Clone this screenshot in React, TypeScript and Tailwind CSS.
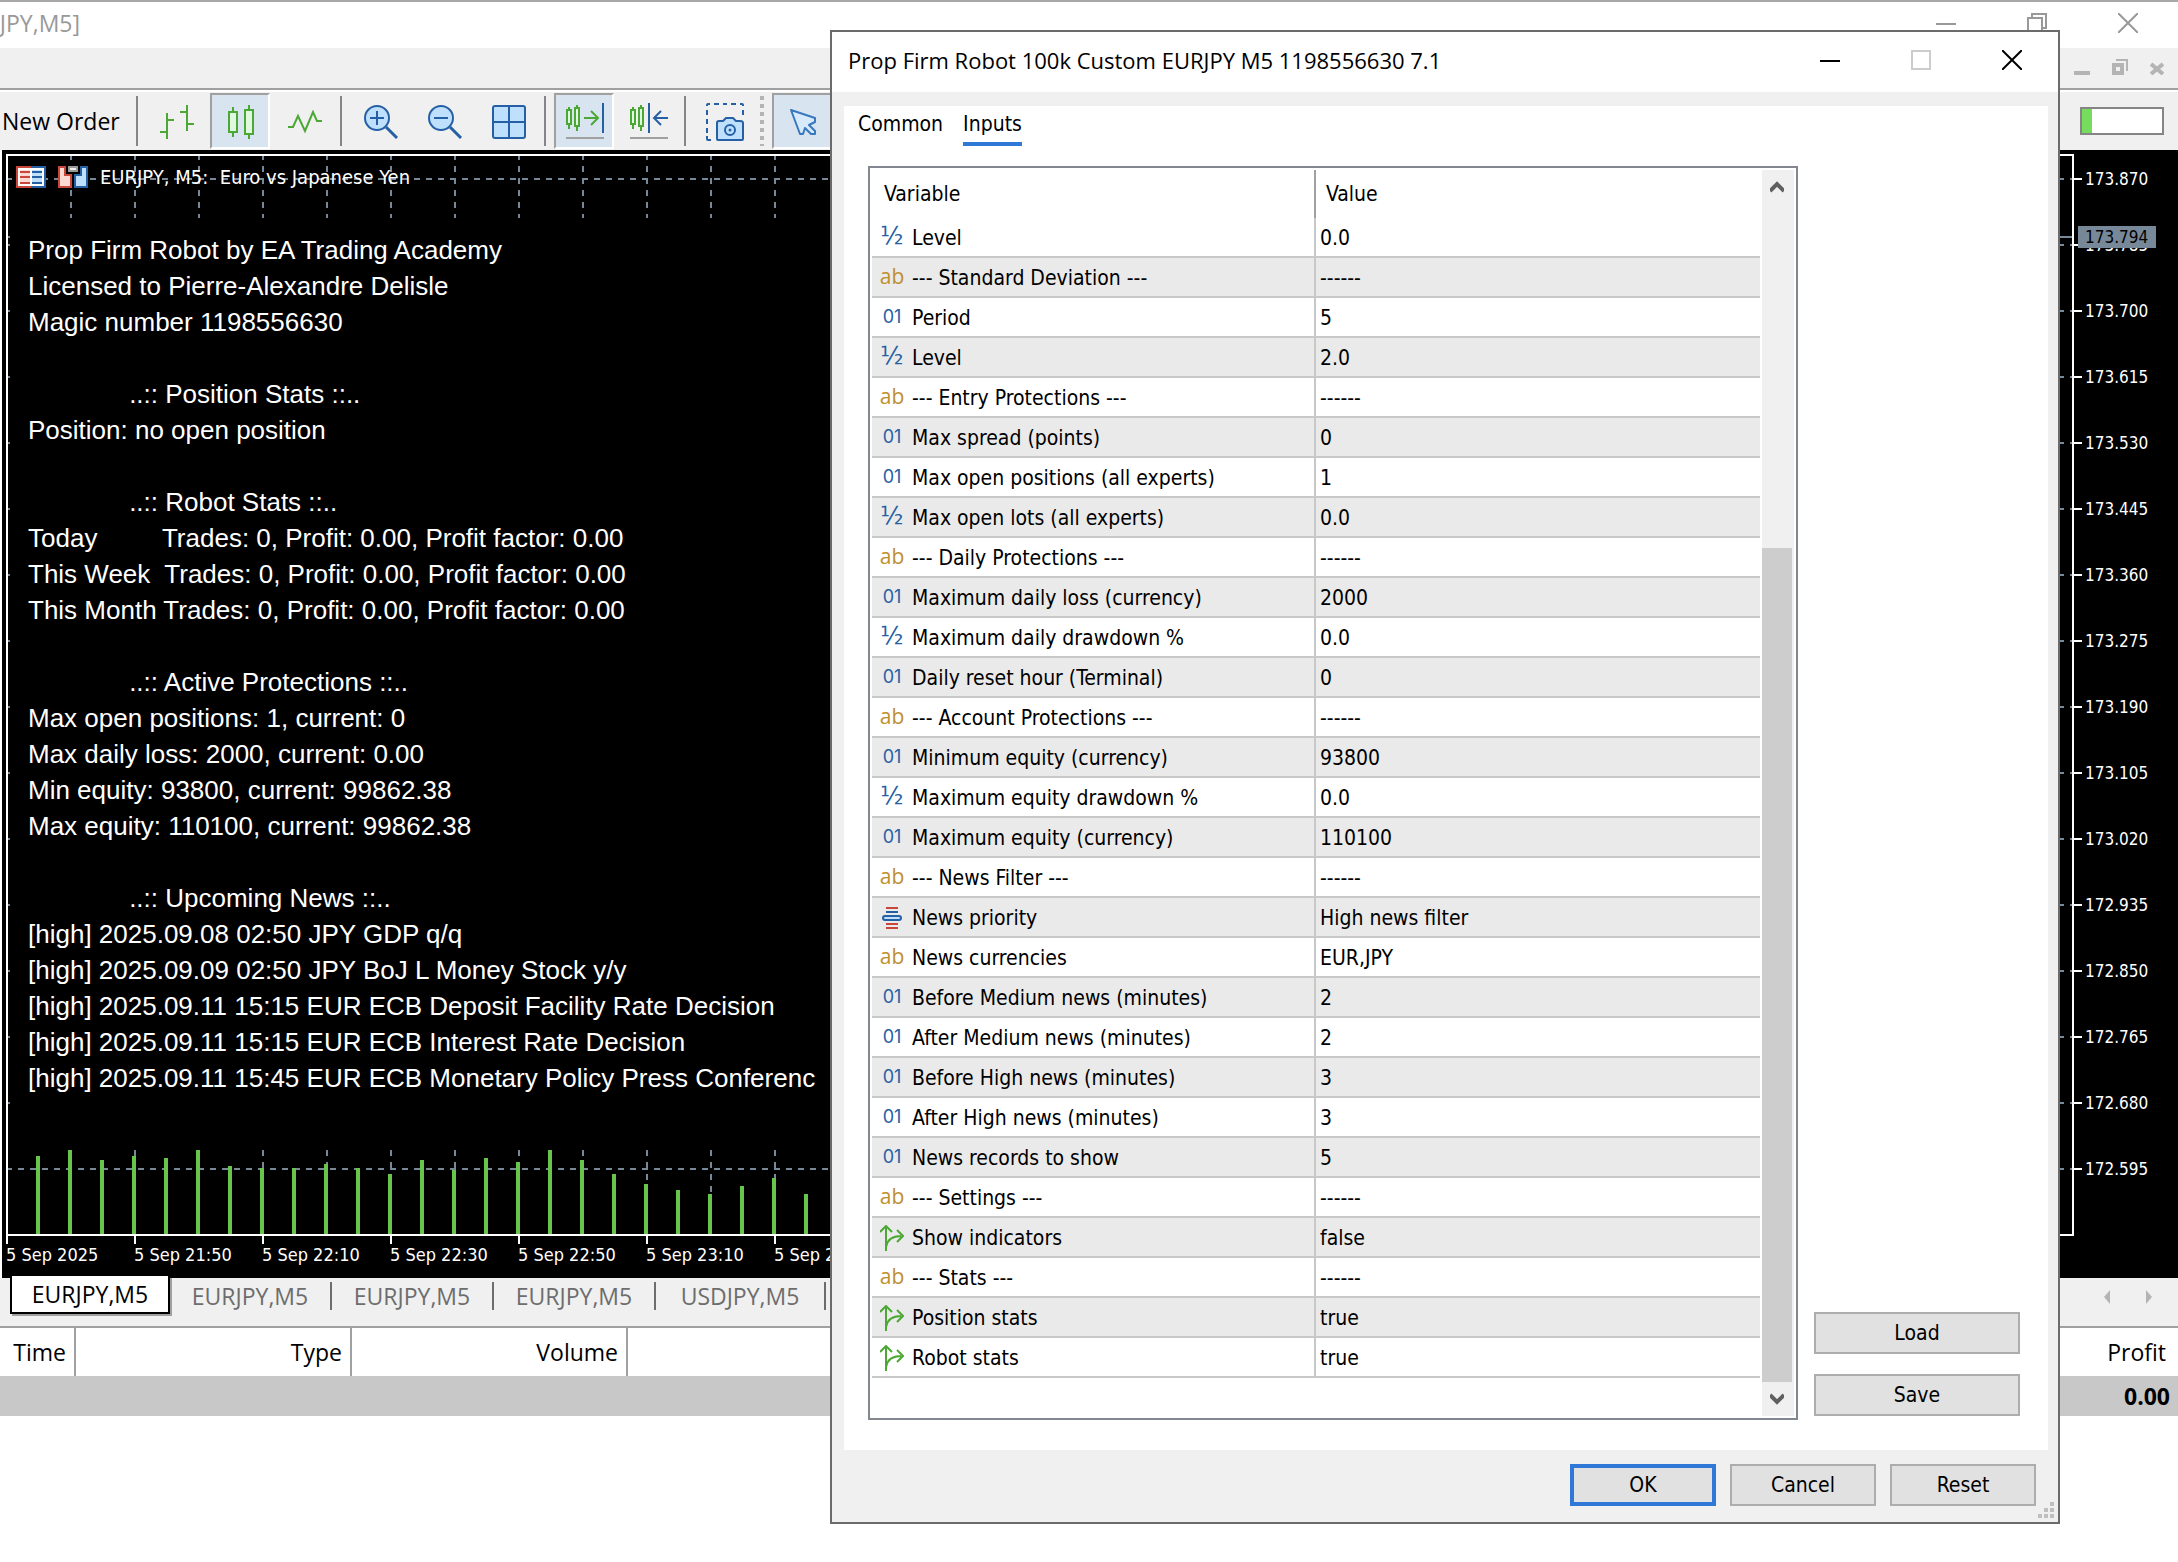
import React, { useState } from 'react';

type InputKind = 'int' | 'double' | 'string' | 'enum' | 'bool';

type InputRow = {
  kind: InputKind;
  name: string;
  value: string;
};

const ROWS: InputRow[] = [
  { kind: 'double', name: 'Level', value: '0.0' },
  { kind: 'string', name: '--- Standard Deviation ---', value: '------' },
  { kind: 'int', name: 'Period', value: '5' },
  { kind: 'double', name: 'Level', value: '2.0' },
  { kind: 'string', name: '--- Entry Protections ---', value: '------' },
  { kind: 'int', name: 'Max spread (points)', value: '0' },
  { kind: 'int', name: 'Max open positions (all experts)', value: '1' },
  { kind: 'double', name: 'Max open lots (all experts)', value: '0.0' },
  { kind: 'string', name: '--- Daily Protections ---', value: '------' },
  { kind: 'int', name: 'Maximum daily loss (currency)', value: '2000' },
  { kind: 'double', name: 'Maximum daily drawdown %', value: '0.0' },
  { kind: 'int', name: 'Daily reset hour (Terminal)', value: '0' },
  { kind: 'string', name: '--- Account Protections ---', value: '------' },
  { kind: 'int', name: 'Minimum equity (currency)', value: '93800' },
  { kind: 'double', name: 'Maximum equity drawdown %', value: '0.0' },
  { kind: 'int', name: 'Maximum equity (currency)', value: '110100' },
  { kind: 'string', name: '--- News Filter ---', value: '------' },
  { kind: 'enum', name: 'News priority', value: 'High news filter' },
  { kind: 'string', name: 'News currencies', value: 'EUR,JPY' },
  { kind: 'int', name: 'Before Medium news (minutes)', value: '2' },
  { kind: 'int', name: 'After Medium news (minutes)', value: '2' },
  { kind: 'int', name: 'Before High news (minutes)', value: '3' },
  { kind: 'int', name: 'After High news (minutes)', value: '3' },
  { kind: 'int', name: 'News records to show', value: '5' },
  { kind: 'string', name: '--- Settings ---', value: '------' },
  { kind: 'bool', name: 'Show indicators', value: 'false' },
  { kind: 'string', name: '--- Stats ---', value: '------' },
  { kind: 'bool', name: 'Position stats', value: 'true' },
  { kind: 'bool', name: 'Robot stats', value: 'true' },
];

const COMMENT = `Prop Firm Robot by EA Trading Academy
Licensed to Pierre-Alexandre Delisle
Magic number 1198556630

              ..:: Position Stats ::..
Position: no open position

              ..:: Robot Stats ::..
Today         Trades: 0, Profit: 0.00, Profit factor: 0.00
This Week  Trades: 0, Profit: 0.00, Profit factor: 0.00
This Month Trades: 0, Profit: 0.00, Profit factor: 0.00

              ..:: Active Protections ::..
Max open positions: 1, current: 0
Max daily loss: 2000, current: 0.00
Min equity: 93800, current: 99862.38
Max equity: 110100, current: 99862.38

              ..:: Upcoming News ::..
[high] 2025.09.08 02:50 JPY GDP q/q
[high] 2025.09.09 02:50 JPY BoJ L Money Stock y/y
[high] 2025.09.11 15:15 EUR ECB Deposit Facility Rate Decision
[high] 2025.09.11 15:15 EUR ECB Interest Rate Decision
[high] 2025.09.11 15:45 EUR ECB Monetary Policy Press Conferenc`;

const PRICES = [
  '173.870', '173.785', '173.700', '173.615', '173.530', '173.445', '173.360', '173.275',
  '173.190', '173.105', '173.020', '172.935', '172.850', '172.765', '172.680', '172.595',
];

const TIMES = ['5 Sep 2025', '5 Sep 21:50', '5 Sep 22:10', '5 Sep 22:30', '5 Sep 22:50', '5 Sep 23:10', '5 Sep 23:30'];

// tick volumes, in pixels above the time axis
const VOLUMES = [78, 84, 74, 78, 76, 84, 68, 66, 66, 70, 66, 60, 74, 64, 76, 72, 84, 74, 60, 50, 44, 40, 48, 56, 40];

const CHART_TABS = ['EURJPY,M5', 'EURJPY,M5', 'EURJPY,M5', 'USDJPY,M5'];

/* ---------- icons ---------- */

const BarsIcon = () => (
  <svg width="34" height="34" viewBox="0 0 34 34" stroke="#4ca834" strokeWidth="2" fill="none">
    <path d="M7 8v26M7 15h7M0 27h7M27 0v26M20 7h7M27 19h7" />
  </svg>
);

const CandlesIcon = () => (
  <svg width="28" height="34" viewBox="0 0 28 34" stroke="#4ca834" strokeWidth="2" fill="#dff8df">
    <path d="M6 2v30M22 0v34" />
    <rect x="2" y="7" width="8" height="20" />
    <rect x="18" y="5" width="8" height="24" />
  </svg>
);

const LineIcon = () => (
  <svg width="34" height="24" viewBox="0 0 34 24" stroke="#4ca834" strokeWidth="2" fill="none">
    <path d="M0 17h5L10 6l7 15 8-19 4 9h5" />
  </svg>
);

const ZoomIcon = ({ plus }: { plus?: boolean }) => (
  <svg width="36" height="36" viewBox="0 0 36 36" stroke="#2560a5" strokeWidth="2" fill="none">
    <circle cx="14" cy="14" r="12" fill="#bfe0fc" />
    <path d="M7 14h14" />
    {plus && <path d="M14 7v14" />}
    <path d="M23 23l11 11" strokeWidth="3" />
  </svg>
);

const TileIcon = () => (
  <svg width="34" height="34" viewBox="0 0 34 34" stroke="#2560a5" strokeWidth="2" fill="#bfe0fc">
    <rect x="1" y="1" width="32" height="32" rx="2" />
    <path d="M17 1v32M1 17h32" />
  </svg>
);

const ShiftIcon = ({ auto }: { auto?: boolean }) => (
  <svg width="38" height="38" viewBox="0 0 38 38" strokeWidth="2" fill="none">
    <g stroke="#4ca834" fill="#dff8df">
      <path d="M3 4v22M11 2v26" />
      <rect x="1" y="7" width="4" height="14" />
      <rect x="9" y="5" width="4" height="18" />
    </g>
    {auto ? (
      <>
        <path d="M18 15h13M25 8l7 7-7 7" stroke="#4ca834" />
        <path d="M37 0v30" stroke="#2560a5" />
      </>
    ) : (
      <path d="M19 0v30M38 15H25M31 8l-7 7 7 7" stroke="#2560a5" />
    )}
    <path d="M0 35h38" stroke="#a0a0a0" />
  </svg>
);

const CameraIcon = () => (
  <svg width="38" height="38" viewBox="0 0 38 38" stroke="#2560a5" strokeWidth="2" fill="none">
    <path d="M1 3V2q0-1 1-1h2M8 1h5M17 1h4M25 1h5M34 1h2q1 0 1 1v1M37 7v5M1 7v5M1 16v5M1 25v5M1 33v3q0 1 1 1h3" />
    <path d="M11 36V20q0-2 2-2h4l3-3h7l3 3h4q3 0 3 2v16q0 1-1 1H12q-1 0-1-1z" fill="#bfe0fc" />
    <circle cx="24" cy="27" r="5" />
    <circle cx="24" cy="27" r="1.5" fill="#2560a5" stroke="none" />
  </svg>
);

const CursorIcon = () => (
  <svg width="28" height="28" viewBox="0 0 28 28" stroke="#3a78bd" strokeWidth="2" fill="#d6eafc" strokeLinejoin="round">
    <path d="M2 2l24 8v4l-6 3 6 6v3h-4l-6-6-2 6h-3z" />
  </svg>
);

const DepthIcon = () => (
  <svg width="30" height="22" viewBox="0 0 30 22">
    <path d="M0 0h15v22H0z" fill="#c9463b" />
    <path d="M15 0h15v22H15z" fill="#2560a5" />
    <path d="M2 2h26v18H2z" fill="#fff" />
    <path d="M4 4h10v14H4z" fill="#fbd9d2" />
    <path d="M16 4h10v14H16z" fill="#bfe0fc" />
    <path d="M4 6h10M4 11h10M4 17h10" stroke="#c9463b" strokeWidth="2" />
    <path d="M16 6h10M16 11h10M16 17h10" stroke="#2560a5" strokeWidth="2" />
  </svg>
);

const TradeIcon = () => (
  <svg width="30" height="22" viewBox="0 0 30 22">
    <path d="M0 0h8v8h6v14H0z" fill="#c9463b" />
    <path d="M2 2h4v8h6v10H2z" fill="#fbd9d2" />
    <path d="M30 0h-8v8h-6v14h14z" fill="#2560a5" />
    <path d="M28 2h-4v8h-6v10h10z" fill="#bfe0fc" />
    <path d="M10 0h10v6H10z" fill="#999" />
    <path d="M12 2h6v2h-6z" fill="#eee" />
  </svg>
);

const EnumIcon = () => (
  <svg width="20" height="22" viewBox="0 0 20 22" strokeWidth="2" fill="none">
    <path d="M4 1h12M4 17h12M4 21h12" stroke="#c9463b" />
    <path d="M4 5h12" stroke="#2560a5" />
    <rect x="1" y="9" width="18" height="4" rx="2" fill="#bfe0fc" stroke="#2560a5" />
  </svg>
);

const BoolIcon = () => (
  <svg width="24" height="26" viewBox="0 0 24 26" stroke="#4ca834" strokeWidth="2" fill="none">
    <path d="M6 26V2M0 7l6-6 6 6M6 22q2-11 15-11M17 5l6 6-6 6" />
  </svg>
);

const KindIcon: React.FC<{ kind: InputKind }> = ({ kind }) => {
  if (kind === 'enum') return <EnumIcon />;
  if (kind === 'bool') return <BoolIcon />;
  if (kind === 'string') return <span className="pb-1 font-['Open_Sans',sans-serif] text-[21px] leading-6 text-[#bf8f2f]">ab</span>;
  if (kind === 'double') return <span className="pb-1 font-['DejaVu_Sans',sans-serif] text-[24px] leading-6 text-[#2560a5]">½</span>;
  return <span className="pb-0.5 font-['Inter',sans-serif] text-[18px] leading-6 text-[#2560a5]">01</span>;
};

/* ---------- main window ---------- */

const ToolButton: React.FC<{ label: string; active?: boolean; children: React.ReactNode }> = ({ label, active, children }) => (
  <button
    type="button"
    aria-label={label}
    className={`flex h-14 w-[60px] shrink-0 items-center justify-center border-2 pt-0.5 pl-0.5 ${
      active ? 'border-t-[#a0a0a0] border-l-[#a0a0a0] border-r-white border-b-white bg-[#d9e4f1]' : 'border-transparent'
    }`}
  >
    {children}
  </button>
);

const Separator = () => <div className="mr-2 ml-1.5 h-[50px] w-0.5 shrink-0 bg-[#858585]" />;

const Toolbar = () => (
  <div className="flex h-[58px] items-center bg-[#f0f0f0]">
    <button type="button" className="w-[130px] shrink-0 pl-0.5 text-left text-[23px] whitespace-nowrap">New Order</button>
    <Separator />
    <div className="flex gap-1">
      <ToolButton label="Bar chart"><BarsIcon /></ToolButton>
      <ToolButton label="Candlesticks" active><CandlesIcon /></ToolButton>
      <ToolButton label="Line chart"><LineIcon /></ToolButton>
    </div>
    <Separator />
    <div className="flex gap-1">
      <ToolButton label="Zoom in"><ZoomIcon plus /></ToolButton>
      <ToolButton label="Zoom out"><ZoomIcon /></ToolButton>
      <ToolButton label="Tile windows"><TileIcon /></ToolButton>
    </div>
    <Separator />
    <div className="flex gap-1">
      <ToolButton label="Auto scroll" active><ShiftIcon auto /></ToolButton>
      <ToolButton label="Chart shift"><ShiftIcon /></ToolButton>
    </div>
    <Separator />
    <ToolButton label="Save as picture"><CameraIcon /></ToolButton>
    <div className="mr-2 ml-1.5 h-[50px] w-1 shrink-0 bg-[repeating-linear-gradient(#b4b4b4_0_4px,transparent_4px_8px)]" />
    <ToolButton label="Cursor" active><CursorIcon /></ToolButton>
    <div className="mr-3.5 ml-auto h-7 w-[84px] border-2 border-[#858585] bg-white">
      <div className="h-full w-2.5 bg-[#76dd5c]" />
    </div>
  </div>
);

const ChartGrid = () => (
  <svg className="absolute inset-0 h-full w-full" shapeRendering="crispEdges">
    <g stroke="#778899" strokeWidth="2" strokeDasharray="6 6">
      {PRICES.map((p, i) => (
        <line key={p} x1="-2" x2="100%" y1={23 + i * 66} y2={23 + i * 66} />
      ))}
      {Array.from({ length: 32 }, (_, i) => (
        <React.Fragment key={i}>
          <line x1={63 + i * 64} x2={63 + i * 64} y1="-2" y2="62" />
          <line x1={63 + i * 64} x2={63 + i * 64} y1="994" y2="1078" />
        </React.Fragment>
      ))}
    </g>
    <line x1="0" x2="100%" y1="81" y2="81" stroke="#778899" strokeWidth="2" />
  </svg>
);

const Chart = () => (
  <section className="ml-0.5 bg-black pt-1 pl-1 text-white">
    <div className="flex">
      <div className="relative h-[1082px] flex-1 border-2 border-white">
        <ChartGrid />
        <header className="relative flex h-[62px] items-start gap-3 px-2 pt-2.5">
          <DepthIcon />
          <TradeIcon />
          <h2 className="font-['DejaVu_Sans_Condensed','DejaVu_Sans',sans-serif] text-[20px] leading-[22px] whitespace-pre">
            EURJPY, M5:  Euro vs Japanese Yen
          </h2>
        </header>
        <pre className="relative ml-0.5 h-[932px] w-[1200px] bg-black pt-3.5 pl-[18px] font-['Liberation_Sans',Arial,sans-serif] text-[26px] leading-9">
          {COMMENT}
        </pre>
        <div className="absolute bottom-0 left-7 flex items-end gap-7">
          {VOLUMES.map((h, i) => (
            <div key={i} className="w-1 bg-[#67c64a]" style={{ height: h }} />
          ))}
        </div>
      </div>
      <div className="relative w-[104px] font-['DejaVu_Sans_Condensed','DejaVu_Sans',sans-serif] text-[17px] leading-[22px]">
        <ul>
          {PRICES.map(p => (
            <li key={p} className="flex h-[66px] items-start gap-[3px] pt-3.5">
              <span className="mt-2.5 h-0.5 w-2 bg-white" />
              {p}
            </li>
          ))}
        </ul>
        <span className="absolute top-[72px] left-1 w-[78px] bg-[#778899] pl-[7px] text-black">173.794</span>
      </div>
    </div>
    <div className="flex h-[42px] overflow-hidden font-['DejaVu_Sans_Condensed','DejaVu_Sans',sans-serif] text-[18px] leading-[22px]">
      {TIMES.map(t => (
        <div key={t} className="w-32 shrink-0">
          <div className="h-2 w-0.5 bg-white" />
          {t}
        </div>
      ))}
    </div>
  </section>
);

const ChartTabs = () => (
  <nav className="flex h-12 items-start border-l-2 border-[#f0f0f0] bg-[#f0f0f0] pl-2 text-[23px] leading-8 text-[#6d6d6d]">
    <button type="button" className="relative -mt-0.5 h-[38px] w-40 border-2 border-t-0 border-black bg-white leading-8 text-black shadow-[2px_2px_0_#a0a0a0]">
      EURJPY,M5
    </button>
    {CHART_TABS.map((t, i) => (
      <button key={i} type="button" className="mt-1 h-7 w-[162px] border-r-2 border-[#6d6d6d] leading-7 last-of-type:w-[170px]">
        {t}
      </button>
    ))}
    <div className="mt-3 mr-[26px] ml-auto flex gap-9">
      <button type="button" aria-label="Previous charts">
        <svg width="6" height="14" viewBox="0 0 6 14" fill="#b4b4b4"><path d="M6 0v14L0 7z" /></svg>
      </button>
      <button type="button" aria-label="Next charts">
        <svg width="6" height="14" viewBox="0 0 6 14" fill="#b4b4b4"><path d="M0 0v14l6-7z" /></svg>
      </button>
    </div>
  </nav>
);

const TradeTable = () => (
  <table className="w-full table-fixed border-separate border-spacing-0 border-t-2 border-[#a0a0a0] text-right text-[23px]">
    <thead>
      <tr className="h-12 bg-white">
        <th className="w-[76px] border-r-2 border-[#a0a0a0] pr-2 font-normal">Time</th>
        <th className="w-[276px] border-r-2 border-[#a0a0a0] pr-2 font-normal">Type</th>
        <th className="w-[276px] border-r-2 border-[#a0a0a0] pr-2 font-normal">Volume</th>
        <th className="pr-3 font-normal">Profit</th>
      </tr>
    </thead>
    <tbody>
      <tr className="h-10 bg-[#c8c8c8]">
        <td colSpan={4} className="pr-2 font-bold">0.00</td>
      </tr>
    </tbody>
  </table>
);

/* ---------- dialog ---------- */

const DialogButton: React.FC<{ children: React.ReactNode; primary?: boolean; wide?: boolean }> = ({ children, primary, wide }) => (
  <button
    type="button"
    className={`h-[42px] bg-[#e1e1e1] ${wide ? 'w-[206px]' : 'w-[146px]'} ${
      primary ? 'border-4 border-[#3078d7]' : 'border-2 border-[#adadad]'
    }`}
  >
    {children}
  </button>
);

const ScrollBar = () => (
  <div className="flex w-8 flex-col bg-[#f0f0f0] pr-0.5">
    <button type="button" aria-label="Scroll up" className="flex h-[34px] items-center justify-center">
      <svg width="14" height="12" viewBox="0 0 14 12" fill="none" stroke="#606060" strokeWidth="4"><path d="M0 10l7-7 7 7" /></svg>
    </button>
    <div className="mt-[344px] flex-1 bg-[#cdcdcd]" />
    <button type="button" aria-label="Scroll down" className="flex h-[34px] items-center justify-center">
      <svg width="14" height="12" viewBox="0 0 14 12" fill="none" stroke="#606060" strokeWidth="4"><path d="M0 2l7 7 7-7" /></svg>
    </button>
  </div>
);

const InputsTable = () => (
  <div className="flex h-[1254px] w-[930px] items-stretch gap-0.5 border-2 border-[#828790] p-0.5">
    <div className="flex-1">
      <table className="w-full table-fixed border-separate border-spacing-0 text-left">
        <thead>
          <tr className="h-12">
            <th className="w-[444px] border-r-2 border-[#a0a0a0] pl-3 font-normal">Variable</th>
            <th className="pl-2.5 font-normal">Value</th>
          </tr>
        </thead>
        <tbody>
          {ROWS.map((row, i) => (
            <tr key={i} className="h-10 even:bg-[#eaeaea]">
              <td className="border-r-2 border-b-2 border-[#c8c8c8] p-0 pt-0.5">
                <div className="flex items-center">
                  <span className="flex w-10 justify-center">
                    <KindIcon kind={row.kind} />
                  </span>
                  {row.name}
                </div>
              </td>
              <td className="border-b-2 border-[#c8c8c8] p-0 pt-0.5 pl-1">{row.value}</td>
            </tr>
          ))}
        </tbody>
      </table>
    </div>
    <ScrollBar />
  </div>
);

const PropertiesDialog = () => {
  const [tab, setTab] = useState('Inputs');

  return (
    <div
      role="dialog"
      className="absolute top-[30px] left-[830px] w-[1230px] border-2 border-[#6b6b6b] bg-[#f0f0f0] font-['DejaVu_Sans_Condensed','DejaVu_Sans',sans-serif] text-[21px] leading-7"
    >
      <div className="flex h-[60px] items-center bg-white pr-9 pb-1 pl-4">
        <h1 className="flex-1 font-['Open_Sans',sans-serif] text-[22px]">Prop Firm Robot 100k Custom EURJPY M5 1198556630 7.1</h1>
        <div className="flex gap-[71px]">
          <button type="button" aria-label="Minimize">
            <svg width="20" height="20" viewBox="0 0 20 20"><path d="M0 11h20" stroke="#000" strokeWidth="2" /></svg>
          </button>
          <button type="button" aria-label="Maximize">
            <svg width="20" height="20" viewBox="0 0 20 20"><path d="M1 1h18v18H1z" stroke="#ccc" strokeWidth="2" fill="none" /></svg>
          </button>
          <button type="button" aria-label="Close">
            <svg width="20" height="20" viewBox="0 0 20 20"><path d="M0 0l20 20M20 0L0 20" stroke="#000" strokeWidth="2" /></svg>
          </button>
        </div>
      </div>

      <div className="mx-2.5 mt-3.5 ml-3 bg-white pt-1 pb-[30px]">
        <div className="flex h-9 gap-5 pl-3.5">
          {['Common', 'Inputs'].map(t => (
            <button
              key={t}
              type="button"
              onClick={() => setTab(t)}
              className={`h-9 border-b-4 pb-1 ${t === tab ? 'border-[#3078d7]' : 'border-transparent'}`}
            >
              {t}
            </button>
          ))}
        </div>
        <div className="mt-5 ml-6 flex gap-4">
          <InputsTable />
          <div className="flex flex-col justify-end gap-5 pb-1">
            <DialogButton wide>Load</DialogButton>
            <DialogButton wide>Save</DialogButton>
          </div>
        </div>
      </div>

      <div className="flex justify-end gap-3.5 pt-3.5 pr-[22px] pb-4">
        <DialogButton primary>OK</DialogButton>
        <DialogButton>Cancel</DialogButton>
        <DialogButton>Reset</DialogButton>
      </div>
      <svg className="absolute right-1 bottom-1" width="16" height="16" viewBox="0 0 16 16" fill="#bfbfbf">
        <path d="M12 0h4v4h-4zM6 6h4v4H6zM12 6h4v4h-4zM0 12h4v4H0zM6 12h4v4H6zM12 12h4v4h-4z" />
      </svg>
    </div>
  );
};

const App: React.FC = () => {
  return (
    <main className="relative min-h-screen overflow-hidden bg-white font-['Open_Sans',sans-serif] text-[23px] text-black">
      <div className="flex h-12 items-center justify-between border-t-2 border-[#a8a8a8] pr-10 pb-1 text-[#999]">
        <div className="flex w-20 justify-end overflow-hidden">JPY,M5]</div>
        <div className="flex gap-[71px]">
          <button type="button" aria-label="Minimize window">
            <svg width="20" height="20" viewBox="0 0 20 20"><path d="M0 11h20" stroke="#999" strokeWidth="2" /></svg>
          </button>
          <button type="button" aria-label="Restore window">
            <svg width="20" height="20" viewBox="0 0 20 20" fill="none" stroke="#999" strokeWidth="2"><path d="M1 5h14v14H1zM5 5V1h14v14h-4" /></svg>
          </button>
          <button type="button" aria-label="Close window">
            <svg width="20" height="20" viewBox="0 0 20 20"><path d="M0 0l20 20M20 0L0 20" stroke="#999" strokeWidth="2" /></svg>
          </button>
        </div>
      </div>
      <div className="flex h-11 items-center justify-end gap-[22px] border-b-2 border-white bg-[#f0f0f0] pr-3.5 pb-1 shadow-[inset_0_-2px_0_#a0a0a0]">
        <button type="button" aria-label="Minimize chart">
          <svg width="16" height="16" viewBox="0 0 16 16"><path d="M0 14h16" stroke="#b4b4b4" strokeWidth="4" /></svg>
        </button>
        <button type="button" aria-label="Restore chart">
          <svg width="16" height="16" viewBox="0 0 16 16" fill="none" stroke="#b4b4b4"><path d="M2 6h8v8H2z" strokeWidth="4" /><path d="M4 1h11v11" strokeWidth="2" /></svg>
        </button>
        <button type="button" aria-label="Close chart">
          <svg width="14" height="16" viewBox="0 0 14 16"><path d="M1 5l12 10M13 5L1 15" stroke="#b4b4b4" strokeWidth="4" /></svg>
        </button>
      </div>
      <Toolbar />
      <Chart />
      <ChartTabs />
      <TradeTable />
      <PropertiesDialog />
    </main>
  );
};

export default App;
